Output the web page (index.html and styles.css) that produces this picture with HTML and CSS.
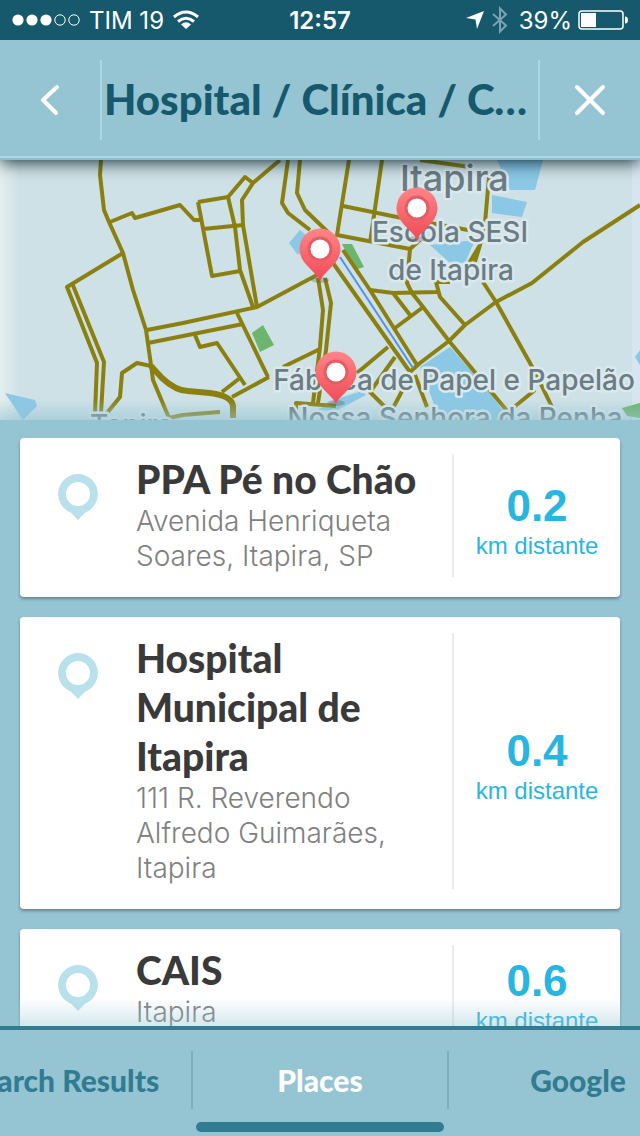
FILE: index.html
```html
<!DOCTYPE html>
<html lang="pt-BR">
<head>
    <meta charset="UTF-8">
    <meta name="viewport" content="width=device-width, initial-scale=1.0">
    <title>Hospital / Clínica / Centro de Saúde</title>
    <link rel="stylesheet" href="styles.css">
</head>
<body>
    <div class="statusbar">
        <div class="status-left">
            <svg width="68" height="14" viewBox="0 0 68 14">
                <g fill="#fff"><circle cx="6" cy="7" r="5.6"/><circle cx="20" cy="7" r="5.6"/><circle cx="34" cy="7" r="5.6"/></g>
                <g fill="none" stroke="#fff"><circle cx="48" cy="7" r="5.2"/><circle cx="62" cy="7" r="5.2"/></g>
            </svg>
            <span>TIM 19</span>
            <svg width="26" height="20" viewBox="0 0 26 20">
                <g fill="none" stroke="#fff" stroke-width="3"><path d="M1 7Q13 -3 25 7"/><path d="M5 11.5Q13 5 21 11.5"/></g>
                <path d="M8 14.5Q13 10 18 14.5L13 19z" fill="#fff"/>
            </svg>
        </div>
        <div class="clock">12:57</div>
        <div class="status-right">
            <svg width="20" height="20" viewBox="0 0 20 20"><path d="M19 1L12 19L10.5 9.5L1 8z" fill="#fff"/></svg>
            <svg width="18" height="28" viewBox="0 0 18 28"><path d="M2 8L15 19.5L9 25.5V2.5L15 8.5L2 20" fill="none" stroke="#7ba4b1" stroke-width="2"/></svg>
            <span class="percent">39%</span>
            <svg width="50" height="20" viewBox="0 0 50 20">
                <rect x="1" y="1" width="44" height="18" rx="3" fill="none" stroke="#fff" stroke-width="1.5"/>
                <rect x="3" y="3" width="15" height="14" fill="#fff"/>
                <path d="M47 6.5q3 0 3 3.500t-3 3.500z" fill="#fff"/>
            </svg>
        </div>
    </div>

    <header class="topbar">
        <button class="nav-btn" aria-label="Voltar">
            <svg width="20" height="32" viewBox="0 0 20 32"><path d="M17 3L3 16L16 29" fill="none" stroke="#fff" stroke-width="4" stroke-linecap="round" stroke-linejoin="round"/></svg>
        </button>
        <h1>Hospital / Clínica / Centro de Saúde</h1>
        <button class="nav-btn" aria-label="Fechar">
            <svg width="32" height="32" viewBox="0 0 32 32"><path d="M3 3L29 29M29 3L3 29" fill="none" stroke="#fff" stroke-width="4" stroke-linecap="round"/></svg>
        </button>
    </header>

    <div class="map">
        <svg viewBox="0 160 640 260" preserveAspectRatio="xMidYMid slice">
            <defs>
                <linearGradient id="pinfill" x1="0" y1="0" x2="0" y2="1">
                    <stop offset="0" stop-color="#ff8589"/>
                    <stop offset="1" stop-color="#f04a55"/>
                </linearGradient>
                <linearGradient id="side">
                    <stop offset="0" stop-color="#e4eeef"/>
                    <stop offset="1" stop-color="#cde1e6"/>
                </linearGradient>
                <linearGradient id="mapfade" x1="0" y1="0" x2="0" y2="1">
                    <stop offset="0" stop-color="#95c4d3" stop-opacity="0"/>
                    <stop offset="1" stop-color="#95c4d3" stop-opacity="0.6"/>
                </linearGradient>
                <g id="pin">
                    <ellipse cx="0" cy="31" rx="9" ry="3" fill="#5b4b40" opacity="0.3"/>
                    <path d="M0 32C-4 22 -20.500 15 -20.500 0A20.500 20.500 0 0 1 20.500 0C20.500 15 4 22 0 32z" fill="url(#pinfill)"/>
                    <circle cx="0" cy="0" r="11" fill="#fff" stroke="#e35d65" stroke-width="3"/>
                </g>
            </defs>
            <rect x="0" y="160" width="640" height="260" fill="#cde1e6"/>
            <rect x="0" y="160" width="20" height="260" fill="url(#side)"/>
            <rect x="632" y="160" width="8" height="260" fill="#d6e5ef"/>

            <!-- water -->
            <g fill="#8ac8e6">
                <path d="M497 160H543L535 190H510z"/>
                <path d="M492 195L527 202L522 217L492 213z"/>
                <path d="M430 245L475 240L465 263H450z"/>
                <path d="M450 347L420 367L440 420H510L490 393L475 375z"/>
                <path d="M5 393L35 400L37 406L23 420z"/>
                <path d="M289 243L300 230L312 240L298 255z"/>
                <path d="M317 410L340 398L362 391L366 395L336 411z"/>
                <path d="M635 357L640 350V365z"/>
            </g>
            <!-- parks -->
            <g fill="#6db56c">
                <path d="M342 244H352L364 267L355 270z"/>
                <path d="M252 333L263 325L274 345L260 352z"/>
                <path d="M622 408L640 403V418L627 416z"/>
            </g>
            <!-- streets -->
            <g class="streets">
                <path d="M101 160L100 175L104 210L109 222L123 253L133 290L146 330L151 365L153 380L169 418L183 415L220 412"/>
                <path d="M110 222L132 213L135 218L180 205L194 220H202"/>
                <path d="M123 253L67 287L97 363L95 413M72 283L104 362L101 413"/>
                <path d="M107 413L120 397L122 373L137 363L151 366"/>
                <path d="M147 330L183 323L257 307L317 275M148 343L243 324"/>
                <path d="M195 335L200 347L217 343L245 385"/>
                <path d="M198 202L212 276L240 271M198 202L228 197L245 177L253 183M203 229L243 225"/>
                <path d="M228 197L235 227L240 270L253 307M280 160L253 183L242 200L243 225L257 307"/>
                <path d="M288 160L282 203L288 213L310 230M300 160L297 193L305 210L333 237"/>
                <path d="M333 263L410 372M343 250L370 290L417 365"/>
                <path d="M318 278L323 310L320 347L313 403M325 278L331 303L326 350L318 403M296 415V403L336 406"/>
                <path d="M237 313L268 377M283 367L320 349M232 397L269 377M222 392L240 378"/>
                <path d="M349 160L337 235L410 249L420 240M382 160L370 243M343 206L397 217L468 230"/>
                <path d="M410 249L407 283L412 293L420 303L449 341L508 412L535 390"/>
                <path d="M370 290L393 293L437 292M393 293L410 315M395 328L422 308M450 282H436L440 297L465 325"/>
                <path d="M640 205L583 242L532 283L496 302L465 325L449 341L420 363L410 372"/>
                <path d="M483 282L496 302L535 372L552 407M489 177L485 223L480 245L474 265M480 245L468 265M420 160L470 167"/>
                <path d="M388 347L357 373M395 357L370 392L385 407M408 375L401 393L393 408M415 375L427 407"/>
                <path class="wide" d="M151 366L162 378Q176 391 188 391L210 393Q233 396 233 407V418"/>
            </g>
            <path d="M340 257L413 368" stroke="#5591e8" stroke-width="2" fill="none"/>

            <g class="labels">
                <text x="400" y="191" font-size="36">Itapira</text>
                <text x="450" y="242" text-anchor="middle">Escola SESI</text>
                <text x="451" y="280" text-anchor="middle">de Itapira</text>
                <text x="454" y="390" text-anchor="middle">Fábrica de Papel e Papelão</text>
                <text x="455" y="428" text-anchor="middle">Nossa Senhora da Penha</text>
                <text x="90" y="435">Tapira</text>
            </g>
            <rect x="0" y="400" width="640" height="20" fill="url(#mapfade)"/>

            <use href="#pin" x="417" y="208"/>
            <use href="#pin" x="320" y="249"/>
            <use href="#pin" x="336" y="372"/>
        </svg>
    </div>

    <main class="list">
        <article class="card">
            <svg class="marker" width="40" height="46" viewBox="0 0 40 46"><path d="M20 0A20 20 0 0 0 13 38.700L20 46L27 38.700A20 20 0 0 0 20 0zM20 8A12 12 0 1 1 20 32A12 12 0 1 1 20 8z" fill="#b9e1eb" fill-rule="evenodd"/></svg>
            <div class="info">
                <h2>PPA Pé no Chão</h2>
                <p>Avenida Henriqueta Soares, Itapira, SP</p>
            </div>
            <div class="distance">
                <strong>0.2</strong>
                <span>km distante</span>
            </div>
        </article>
        <article class="card">
            <svg class="marker" width="40" height="46" viewBox="0 0 40 46"><path d="M20 0A20 20 0 0 0 13 38.700L20 46L27 38.700A20 20 0 0 0 20 0zM20 8A12 12 0 1 1 20 32A12 12 0 1 1 20 8z" fill="#b9e1eb" fill-rule="evenodd"/></svg>
            <div class="info">
                <h2>Hospital Municipal de Itapira</h2>
                <p>111 R. Reverendo Alfredo Guimarães, Itapira</p>
            </div>
            <div class="distance">
                <strong>0.4</strong>
                <span>km distante</span>
            </div>
        </article>
        <article class="card">
            <svg class="marker" width="40" height="46" viewBox="0 0 40 46"><path d="M20 0A20 20 0 0 0 13 38.700L20 46L27 38.700A20 20 0 0 0 20 0zM20 8A12 12 0 1 1 20 32A12 12 0 1 1 20 8z" fill="#b9e1eb" fill-rule="evenodd"/></svg>
            <div class="info">
                <h2>CAIS</h2>
                <p>Itapira</p>
            </div>
            <div class="distance">
                <strong>0.6</strong>
                <span>km distante</span>
            </div>
        </article>
    </main>

    <nav class="tabs">
        <button class="tab">Search Results</button>
        <button class="tab active">Places</button>
        <button class="tab">Google</button>
    </nav>
</body>
</html>
```
FILE: styles.css
```css
*{
    box-sizing: border-box;
}
body{
    margin: 0;
    height: 100vh;
    display: flex;
    flex-direction: column;
    overflow: hidden;
    background-color: #95c4d3;
    font-family: "Liberation Sans", Arial, sans-serif;
}
h1, h2, p{
    margin: 0;
}
button{
    border: none;
    background: none;
    padding: 0;
    cursor: pointer;
}
svg{
    display: block;
    flex: none;
}

/* status bar */
.statusbar{
    flex: none;
    height: 40px;
    padding: 0 12px;
    display: grid;
    grid-template-columns: 1fr auto 1fr;
    align-items: center;
    position: relative;
    z-index: 2;
    background-color: #16596c;
    color: white;
    font-family: Inter, sans-serif;
    font-size: 24px;
}
.status-left, .status-right{
    display: flex;
    align-items: center;
    gap: 9px;
}
.status-right{
    justify-content: flex-end;
    gap: 6px;
}
.percent{
    margin-left: 4px;
}
.clock{
    font-weight: 600;
}

/* header */
.topbar{
    flex: none;
    height: 120px;
    display: flex;
    align-items: center;
    position: relative;
    z-index: 1;
    background: linear-gradient(#95c4d3 116px, #abd6e3 116px, #abd6e3 118px, #8fbfce 118px);
    box-shadow: 0 2px 16px rgba(0, 25, 35, 0.9);
}
.topbar h1{
    flex: 1;
    min-width: 0;
    height: 80px;
    padding: 0 2px;
    border-left: 2px solid #abd6e3;
    border-right: 2px solid #abd6e3;
    overflow: hidden;
    white-space: nowrap;
    text-overflow: ellipsis;
    line-height: 78px;
    color: #16596c;
    font-family: Lato, sans-serif;
    font-weight: 900;
    font-size: 42px;
}
.nav-btn{
    width: 100px;
    height: 100%;
    display: flex;
    align-items: center;
    justify-content: center;
}

/* map */
.map{
    flex: none;
}
.map svg{
    width: 100%;
    height: 260px;
}
.streets{
    fill: none;
    stroke: #8b800f;
    stroke-width: 4;
    stroke-linejoin: round;
}
.streets .wide{
    stroke-width: 6;
}
.labels{
    font-family: Inter, sans-serif;
    font-size: 28px;
    font-weight: 500;
    fill: #6a7c84;
    stroke: #dbe8ec;
    stroke-width: 5;
    stroke-linejoin: round;
    paint-order: stroke;
}

/* results */
.list{
    flex: 1;
    min-height: 0;
    overflow: hidden;
    position: relative;
    padding: 18px 20px 0;
    display: flex;
    flex-direction: column;
    gap: 20px;
}
.list::after{
    content: "";
    position: absolute;
    left: 0;
    right: 0;
    bottom: 0;
    height: 28px;
    background: linear-gradient(rgba(149, 196, 211, 0), rgba(149, 196, 211, 0.4));
}
.card{
    flex: none;
    display: flex;
    padding: 16px 0 20px 38px;
    background-color: white;
    border-radius: 4px;
    box-shadow: 0 2px 3px rgba(70, 90, 95, 0.6);
}
.marker{
    margin-top: 20px;
}
.info{
    flex: 1;
    padding: 1px 20px 3px 38px;
}
.info h2{
    color: #3a3a3a;
    font-family: Lato, sans-serif;
    font-weight: 900;
    font-size: 39px;
    line-height: 49px;
}
.info p{
    color: #808080;
    font-family: Inter, sans-serif;
    font-weight: 300;
    font-size: 28px;
    line-height: 35px;
}
.distance{
    flex: none;
    width: 168px;
    padding-top: 12px;
    border-left: 2px solid #ececec;
    display: flex;
    flex-direction: column;
    align-items: center;
    justify-content: center;
    color: #29b5e2;
}
.distance strong{
    font-size: 44px;
    line-height: 48px;
}
.distance span{
    font-size: 24px;
    line-height: 32px;
}

/* bottom tabs */
.tabs{
    flex: none;
    height: 110px;
    padding-bottom: 6px;
    display: flex;
    justify-content: center;
    align-items: center;
    overflow: hidden;
    border-top: 4px solid #327c91;
    background-color: #95c4d3;
}
.tab{
    flex: 0 0 258px;
    height: 58px;
    position: relative;
    color: #327c91;
    font-family: Lato, sans-serif;
    font-weight: 900;
    font-size: 30px;
}
.tab.active{
    color: white;
    border-left: 2px solid #7eaebd;
    border-right: 2px solid #7eaebd;
}
.tab.active::after{
    content: "";
    position: absolute;
    left: 3px;
    right: 3px;
    bottom: -23px;
    height: 10px;
    border-radius: 5px;
    background-color: #327c91;
}
```
